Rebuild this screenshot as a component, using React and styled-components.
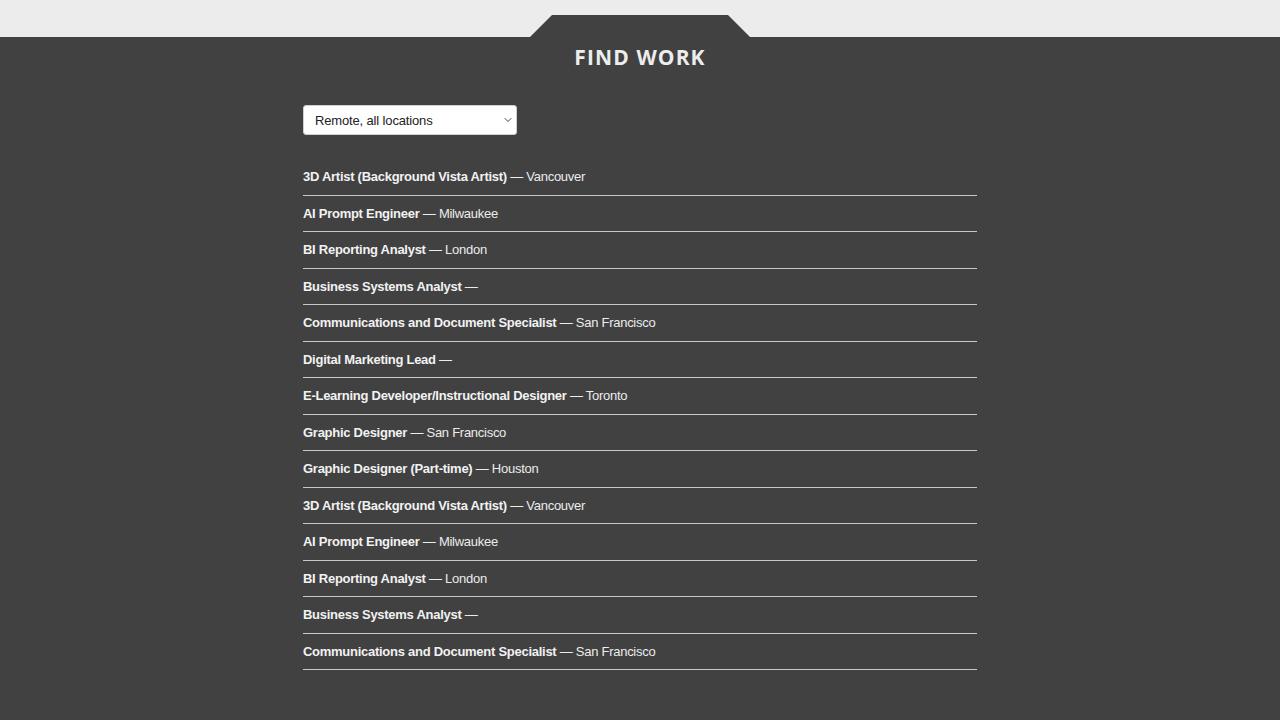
import React from 'react'
import styled, { createGlobalStyle } from 'styled-components'
import { ChevronDown } from 'lucide-react'

const GlobalStyle = createGlobalStyle`
  html, body {
    margin: 0;
    padding: 0;
    background: #414141;
  }
  body {
    font-family: "Liberation Sans", Arial, sans-serif;
  }
`

const jobs = [
  { title: '3D Artist (Background Vista Artist)', city: 'Vancouver' },
  { title: 'AI Prompt Engineer', city: 'Milwaukee' },
  { title: 'BI Reporting Analyst', city: 'London' },
  { title: 'Business Systems Analyst', city: '' },
  { title: 'Communications and Document Specialist', city: 'San Francisco' },
  { title: 'Digital Marketing Lead', city: '' },
  { title: 'E-Learning Developer/Instructional Designer', city: 'Toronto' },
  { title: 'Graphic Designer', city: 'San Francisco' },
  { title: 'Graphic Designer (Part-time)', city: 'Houston' },
  { title: '3D Artist (Background Vista Artist)', city: 'Vancouver' },
  { title: 'AI Prompt Engineer', city: 'Milwaukee' },
  { title: 'BI Reporting Analyst', city: 'London' },
  { title: 'Business Systems Analyst', city: '' },
  { title: 'Communications and Document Specialist', city: 'San Francisco' },
]

const App = () => {
  return (
    <>
      <GlobalStyle />
      <TopBar>
        <Tab />
      </TopBar>
      <Main>
        <Title>FIND WORK</Title>
        <Content>
          <SelectWrap>
            <Select defaultValue="remote">
              <option value="remote">Remote, all locations</option>
              <option value="vancouver">Vancouver</option>
              <option value="london">London</option>
            </Select>
            <Arrow size={12} strokeWidth={2} />
          </SelectWrap>
          <JobList>
            {jobs.map((job, i) => (
              <JobRow key={i}>
                <JobTitle>{job.title}</JobTitle> — {job.city}
              </JobRow>
            ))}
          </JobList>
        </Content>
      </Main>
    </>
  )
}

const TopBar = styled.header`
  height: 37px;
  background: #ececec;
  display: flex;
  justify-content: center;
  align-items: flex-end;
`

const Tab = styled.div`
  width: 220px;
  height: 22px;
  background: #414141;
  clip-path: polygon(22px 0, 198px 0, 100% 100%, 0 100%);
`

const Main = styled.main`
  background: #414141;
  min-height: 683px;
  padding-top: 7px;
`

const Title = styled.h1`
  margin: 0;
  text-align: center;
  color: #ededed;
  font-family: "Open Sans", "Liberation Sans", sans-serif;
  font-weight: 700;
  font-size: 21px;
  letter-spacing: 1.1px;
  line-height: 26px;
`

const Content = styled.section`
  width: 674px;
  margin: 35px auto 0;
`

const SelectWrap = styled.div`
  position: relative;
  width: 214px;
  height: 30px;
`

const Select = styled.select`
  appearance: none;
  width: 100%;
  height: 100%;
  padding: 0 20px 0 11px;
  border: 1px solid #cfcfcf;
  border-radius: 3px;
  background: #ffffff;
  color: #222;
  font-family: "Liberation Sans", Arial, sans-serif;
  font-size: 13px;
  letter-spacing: -0.15px;
`

const Arrow = styled(ChevronDown)`
  position: absolute;
  right: 3px;
  top: 9px;
  color: #444;
  pointer-events: none;
`

const JobList = styled.ul`
  list-style: none;
  margin: 24px 0 0;
  padding: 0;
`

const JobRow = styled.li`
  padding: 10px 0;
  line-height: 15.5px;
  font-size: 13px;
  letter-spacing: -0.27px;
  color: #ececec;
  border-bottom: 1px solid #c9c9c9;
`

const JobTitle = styled.strong`
  font-weight: 700;
  color: #f2f2f2;
`

export default App
